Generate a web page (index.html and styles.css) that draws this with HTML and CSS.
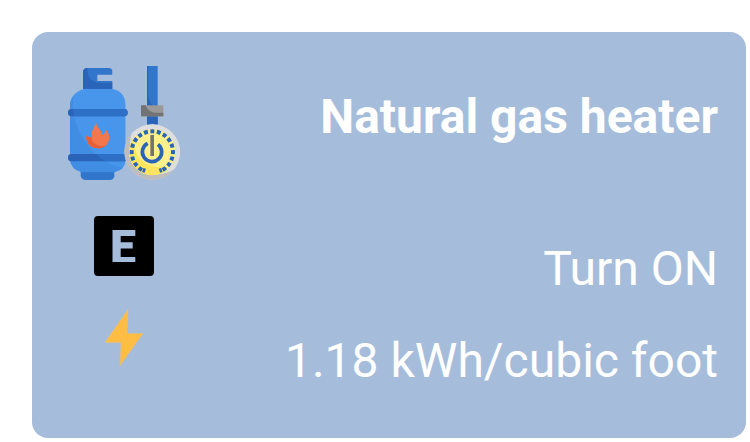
FILE: index.html
```html
<!DOCTYPE html>
<html lang="en">
<head>
<meta charset="utf-8">
<title>Natural gas heater</title>
<link rel="stylesheet" href="styles.css">
</head>
<body>
<article class="card">
  <div class="icons">
    <svg class="icon-device" viewBox="12 18 360 360" aria-hidden="true">
      <defs>
        <clipPath id="tank"><path d="M75 92H153Q196 98 197 143V307Q196 335 163 343H66Q34 335 30 307V143Q32 103 75 92Z"/></clipPath>
        <clipPath id="valve"><path d="M69 93V42Q70 30 82 30H147Q158 31 158 42V50H112V69H158V93Z"/></clipPath>
        <clipPath id="dial"><circle cx="277" cy="282" r="84"/></clipPath>
        <clipPath id="face"><circle cx="277" cy="282" r="70"/></clipPath>
      </defs>
      <path fill="#3276cc" d="M62 340H163V355Q161 366 150 366H75Q64 365 62 354Z"/>
      <g clip-path="url(#valve)">
        <path fill="#3276cc" d="M69 30H158V93H69Z"/>
        <path fill="#2964b8" d="M69 30H83Q80 75 124 74H158V93H69Z"/>
      </g>
      <g clip-path="url(#tank)">
        <path fill="#4796ec" d="M20 85H205V350H20Z"/>
        <path fill="#408de4" d="M30 85H44Q36 118 40 165Q51 222 85 264Q132 322 197 331V350H20V85Z"/>
      </g>
      <rect x="24" y="153" width="179" height="22" rx="10" fill="#2964b8"/>
      <path fill="#2f70c7" d="M39 153H193Q203 154 203 164T193 175H42Z"/>
      <rect x="24" y="288" width="179" height="22" rx="10" fill="#2964b8"/>
      <path fill="#2f70c7" d="M109 288H193Q203 289 203 299T193 310H137Q121 301 109 288Z"/>
      <path fill="#f2774d" d="M108 193C111 211 122 212 127 231Q135 227 139 216C147 226 149 238 147 247Q141 270 113 271Q84 269 79 242Q78 235 82 231Q87 241 95 238C92 218 104 209 108 193Z"/>
      <path fill="#e75f36" d="M82 231Q87 241 95 238Q94 253 111 261Q127 267 139 260Q130 271 113 271Q84 269 79 242Q78 235 82 231Z"/>
      <path fill="#3276cc" d="M261 24H293V200H261Z"/>
      <path fill="#2964b8" d="M261 24H265V116Q268 132 277 142H261ZM261 173H293V200H261Z"/>
      <path fill="#999" d="M243 142H310V175H243Z"/>
      <path fill="#737373" d="M243 142H257Q263 160 282 164H310V175H243Z"/>
      <g clip-path="url(#dial)">
        <circle cx="277" cy="282" r="84" fill="#dededf"/>
        <path fill="#bdbdbf" d="M185 190H235Q208 216 211 264Q216 342 280 349Q325 352 354 324V380H185Z"/>
      </g>
      <g clip-path="url(#face)">
        <circle cx="277" cy="282" r="70" fill="#fff08b"/>
        <path fill="#ffe45d" d="M200 240L223 236Q218 275 239 303Q267 333 323 327L320 355H200Z"/>
      </g>
      <g stroke="#2964b8" fill="none">
        <path stroke-width="12" stroke-dasharray="12 7.478" stroke-dashoffset="6" d="M277 220A62 62 0 0 1 308 335.700M277 220A62 62 0 0 0 246 335.700"/>
        <path stroke-width="8" d="M254 331L250 343M300 331L304 343"/>
        <path stroke-width="11" d="M263 256A29 29 0 1 0 294 259"/>
      </g>
      <path stroke="#fff08b" stroke-width="19" d="M277 230V256"/>
      <path fill="#737373" d="M271 231H282V294H271Z"/>
    </svg>
    <svg class="icon" viewBox="0 0 60 60" aria-hidden="true">
      <path fill="#000" fill-rule="evenodd" d="M4 0H56Q60 0 60 4V56Q60 60 56 60H4Q0 60 0 56V4Q0 0 4 0ZM18.500 14V46H41.300V41H26.700V32.500H38.700V26.200H26.700V20H41.300V14Z"/>
    </svg>
    <svg class="icon" viewBox="0 0 60 60" aria-hidden="true">
      <path fill="#ffbd43" stroke="#e5bf83" stroke-width=".5" d="M34 1.500L11 34.500H27L26 57.500L49 25.500H33Z"/>
    </svg>
  </div>
  <div class="details">
    <h1 class="title">Natural gas heater</h1>
    <p class="line">Turn ON</p>
    <p class="line">1.18 kWh/cubic foot</p>
  </div>
</article>
</body>
</html>
```
FILE: styles.css
```css
body {
  margin: 32px 4px 4px 32px;
  background: #fff;
  font-family: Roboto, sans-serif;
}

.card {
  display: flex;
  justify-content: space-between;
  padding: 32px 28px 49px 32px;
  border-radius: 16px;
  background: #a5bddb;
  color: #fff;
}

.icons {
  display: flex;
  flex-direction: column;
  align-items: center;
  gap: 32px;
}

.icon-device {
  width: 120px;
  height: 120px;
}

.icon {
  width: 60px;
  height: 60px;
}

.details {
  display: flex;
  flex-direction: column;
  gap: 36px;
  padding-top: 25px;
  text-align: right;
}

.title,
.line {
  margin: 0;
  font-size: 48px;
  line-height: 56px;
  font-weight: 400;
}

.title {
  margin-bottom: 60px;
  font-weight: 700;
}
```
